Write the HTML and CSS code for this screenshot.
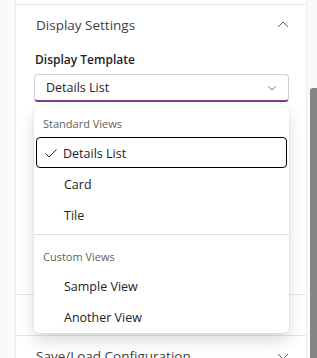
FILE: index.html
```html
<!DOCTYPE html>
<html lang="en">
<head>
    <meta charset="UTF-8">
    <meta name="viewport" content="width=device-width, initial-scale=1.0">
    <title>Display Settings</title>
    <link rel="stylesheet" href="styles.css">
</head>
<body>
    <div class="page">
        <div class="gutter"></div>
        <div class="panel">
            <section class="section">
                <div class="section-head">
                    <span>Display Settings</span>
                    <svg class="chev" width="12" height="12" viewBox="0 0 12 12"><polyline points="1,8 6,3 11,8"/></svg>
                </div>
                <div class="section-body">
                    <div class="field-label">Display Template</div>
                    <div class="dropdown">
                        <div class="dropdown-btn">
                            <span>Details List</span>
                            <svg class="chev small" width="10" height="10" viewBox="0 0 10 10"><polyline points="1.5,3.5 5,7 8.5,3.5"/></svg>
                        </div>
                        <div class="listbox">
                            <div class="group-label">Standard Views</div>
                            <div class="option selected">
                                <svg class="check" width="14" height="14" viewBox="0 0 14 14"><polyline points="1.5,7.5 5,11 12.5,3.5"/></svg>
                                <span>Details List</span>
                            </div>
                            <div class="option"><span>Card</span></div>
                            <div class="option"><span>Tile</span></div>
                            <div class="divider"></div>
                            <div class="group-label second">Custom Views</div>
                            <div class="option"><span>Sample View</span></div>
                            <div class="option"><span>Another View</span></div>
                        </div>
                    </div>
                </div>
            </section>
            <section class="section">
                <div class="section-head">
                    <span></span>
                    <svg class="chev" width="12" height="12" viewBox="0 0 12 12"><polyline points="1,4 6,9 11,4"/></svg>
                </div>
            </section>
            <section class="section">
                <div class="section-head">
                    <span>Save/Load Configuration</span>
                    <svg class="chev" width="12" height="12" viewBox="0 0 12 12"><polyline points="1,4 6,9 11,4"/></svg>
                </div>
            </section>
        </div>
        <div class="scrollbar"><div class="thumb"></div></div>
    </div>
</body>
</html>
```
FILE: styles.css
```css
body {
    margin: 0;
    background: #fafafa;
    font-family: "Open Sans", "Noto Sans", sans-serif;
    color: #242424;
    overflow: hidden;
}
.page {
    display: flex;
    height: 358px;
    overflow: hidden;
}
.gutter {
    width: 15px;
    flex-shrink: 0;
}
.panel {
    width: 290px;
    flex-shrink: 0;
    background: #fff;
    border-left: 1px solid #ececec;
    border-right: 1px solid #f0f0f0;
    padding-top: 4px;
}
.section {
    border-top: 1px solid #e6e6e6;
}
.section-head {
    height: 40px;
    display: flex;
    align-items: center;
    justify-content: space-between;
    padding: 0 17px 0 20px;
    font-size: 13.5px;
    color: #424242;
}
.chev {
    fill: none;
    stroke: #616161;
    stroke-width: 1;
}
.chev.small {
    stroke: #707070;
}
.section-body {
    height: 249px;
    box-sizing: border-box;
    padding: 5px 17px 0 18px;
}
.field-label {
    font-size: 12px;
    font-weight: 600;
    line-height: 20px;
    margin-bottom: 4px;
    padding-left: 1px;
}
.dropdown {
    position: relative;
}
.dropdown-btn {
    height: 28px;
    box-sizing: border-box;
    border: 1px solid #d1d1d1;
    border-bottom: 2px solid #7b3b8e;
    border-radius: 4px;
    display: flex;
    align-items: center;
    justify-content: space-between;
    padding: 0 11px 0 11px;
    font-size: 12.5px;
}
.listbox {
    position: absolute;
    top: 32px;
    left: 0;
    right: 0;
    background: #fff;
    border-radius: 5px;
    box-shadow: 0 0 2px rgba(0, 0, 0, 0.12), 0 8px 16px rgba(0, 0, 0, 0.14);
    padding: 4px 2px 1px;
    z-index: 2;
}
.group-label {
    height: 27px;
    display: flex;
    align-items: center;
    padding-left: 7px;
    font-size: 11px;
    color: #616161;
}
.group-label.second {
    margin-top: 8px;
}
.option {
    height: 31px;
    box-sizing: border-box;
    display: flex;
    align-items: center;
    padding: 1px 0 0 27px;
    font-size: 12.5px;
    border: 1px solid transparent;
    border-radius: 4px;
}
.option.selected {
    border-color: #000;
    padding-left: 7px;
    gap: 5px;
}
.check {
    fill: none;
    stroke: #242424;
    stroke-width: 1;
    width: 14px;
}
.divider {
    height: 1px;
    background: #e0e0e0;
    margin: 4px -2px 0;
}
.scrollbar {
    flex: 1;
    display: flex;
    justify-content: flex-end;
}
.thumb {
    width: 7px;
    margin-top: 88px;
    background: #858585;
    border-radius: 3px 0 0 0;
}
```
